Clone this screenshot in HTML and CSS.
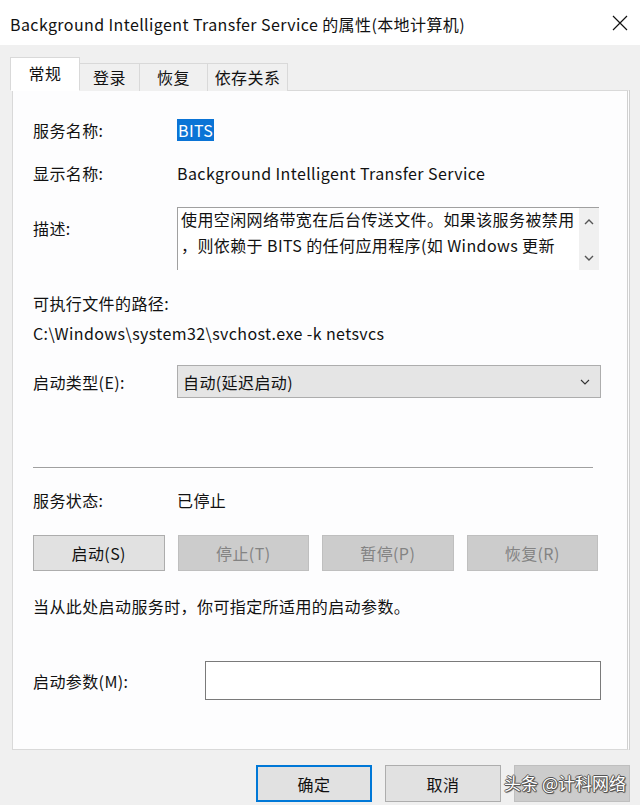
FILE: index.html
```html
<!DOCTYPE html>
<html lang="zh-CN">
<head>
<meta charset="utf-8">
<title>BITS 属性</title>
<link rel="stylesheet" href="styles.css">
</head>
<body>
<div class="window">
  <div class="titlebar">
    <span class="title">Background Intelligent Transfer Service 的属性(本地计算机)</span>
    <svg class="close" width="16" height="16" viewBox="0 0 16 16"><path d="M1 1 L15 15 M15 1 L1 15" stroke="#111" stroke-width="1.2" fill="none"/></svg>
  </div>
  <div class="body">
    <div class="tabs">
      <div class="tab tab-active">常规</div>
      <div class="tab tab-2">登录</div>
      <div class="tab tab-3">恢复</div>
      <div class="tab tab-4">依存关系</div>
    </div>
    <div class="panel">
      <div class="row row-name">
        <span class="label">服务名称:</span>
        <span class="value"><span class="selected">BITS</span></span>
      </div>
      <div class="row row-display">
        <span class="label">显示名称:</span>
        <span class="value">Background Intelligent Transfer Service</span>
      </div>
      <div class="row row-desc">
        <span class="label label-desc">描述:</span>
        <div class="descbox">
          <div class="desctext">
            <div>使用空闲网络带宽在后台传送文件。如果该服务被禁用</div>
            <div>，则依赖于 BITS 的任何应用程序(如 Windows 更新</div>
          </div>
          <div class="scrollbar">
            <svg width="10" height="6" viewBox="0 0 10 6"><path d="M1 5 L5 1 L9 5" stroke="#555" stroke-width="1.4" fill="none"/></svg>
            <svg width="10" height="6" viewBox="0 0 10 6"><path d="M1 1 L5 5 L9 1" stroke="#555" stroke-width="1.4" fill="none"/></svg>
          </div>
        </div>
      </div>
      <div class="pathlabel">可执行文件的路径:</div>
      <div class="path">C:\Windows\system32\svchost.exe -k netsvcs</div>
      <div class="row row-type">
        <span class="label">启动类型(E):</span>
        <div class="select">
          <span>自动(延迟启动)</span>
          <svg width="10" height="6" viewBox="0 0 10 6"><path d="M1 1 L5 5 L9 1" stroke="#333" stroke-width="1.1" fill="none"/></svg>
        </div>
      </div>
      <div class="separator"></div>
      <div class="row row-status">
        <span class="label">服务状态:</span>
        <span class="value">已停止</span>
      </div>
      <div class="actions">
        <div class="btn">启动(S)</div>
        <div class="btn btn-disabled">停止(T)</div>
        <div class="btn btn-disabled">暂停(P)</div>
        <div class="btn btn-disabled">恢复(R)</div>
      </div>
      <div class="hint">当从此处启动服务时，你可指定所适用的启动参数。</div>
      <div class="row row-param">
        <span class="label label-param">启动参数(M):</span>
        <div class="input"></div>
      </div>
    </div>
    <div class="footer">
      <div class="btn btn-default">确定</div>
      <div class="btn">取消</div>
      <div class="btn btn-disabled"></div>
    </div>
  </div>
  <div class="watermark">头条 @计科网络</div>
</div>
</body>
</html>
```
FILE: styles.css
```css
html, body {
  margin: 0;
  padding: 0;
}
body {
  width: 640px;
  height: 805px;
  overflow: hidden;
  font-family: "Noto Sans CJK SC", "Noto Sans", sans-serif;
  font-size: 16px;
  letter-spacing: 0.4px;
  color: #111;
}
.window {
  position: relative;
  width: 640px;
  height: 805px;
  background: #f0f0f0;
}
.titlebar {
  height: 45px;
  background: #fff;
  display: flex;
  align-items: center;
  justify-content: space-between;
  padding: 2px 12px 0 10px;
  box-sizing: border-box;
}
.title {
  font-size: 16px;
  line-height: 22px;
}
.close {
  display: block;
  margin-top: -2px;
}
.body {
  padding: 0 10px 0 12px;
}
.tabs {
  display: flex;
  align-items: flex-end;
  height: 45px;
  margin-left: -2px;
}
.tab {
  height: 28px;
  box-sizing: border-box;
  border: 1px solid #d9d9d9;
  border-bottom: none;
  background: #f0f0f0;
  display: flex;
  align-items: center;
  justify-content: center;
  line-height: 20px;
  margin-bottom: -1px;
  padding-bottom: 2px;
  position: relative;
}
.tab-active {
  width: 70px;
  height: 34px;
  background: #fff;
  border-bottom: 1px solid #fff;
  padding-bottom: 3px;
  z-index: 1;
}
.tab-2 { width: 60px; border-left: none; }
.tab-3 { width: 68px; border-left: none; }
.tab-4 { width: 80px; border-left: none; }
.panel {
  width: 618px;
  height: 660px;
  box-sizing: border-box;
  background: #fdfdfe;
  border: 1px solid #d9d9d9;
  border-right: 3px double #d0d0d0;
  padding: 28px 26px 0 20px;
  display: flex;
  flex-direction: column;
}
.row {
  display: flex;
  align-items: flex-start;
  line-height: 22px;
}
.label {
  width: 144px;
  flex: none;
}
.selected {
  background: #0a74d6;
  color: #fff;
  padding: 0 1px;
  display: inline-block;
  line-height: 22px;
}
.row-display { margin-top: 21px; }
.row-desc { margin-top: 23px; }
.label-desc { padding-top: 10px; }
.descbox {
  width: 422px;
  height: 63px;
  box-sizing: border-box;
  border-top: 1px solid #a0a0a0;
  border-left: 1px solid #a0a0a0;
  background: #fff;
  display: flex;
}
.desctext {
  flex: 1;
  padding-left: 3px;
  line-height: 26px;
  margin-top: -2px;
  white-space: nowrap;
  overflow: hidden;
}
.scrollbar {
  width: 20px;
  background: #f0f0f0;
  display: flex;
  flex-direction: column;
  justify-content: space-between;
  align-items: center;
  padding: 11px 0 9px;
}
.scrollbar svg { display: block; }
.pathlabel {
  margin-top: 22px;
  line-height: 22px;
}
.path {
  margin-top: 8px;
  line-height: 22px;
}
.row-type {
  margin-top: 21px;
  align-items: center;
}
.select {
  width: 424px;
  height: 33px;
  box-sizing: border-box;
  background: #e5e5e5;
  border: 1px solid #adadad;
  display: flex;
  align-items: center;
  justify-content: space-between;
  padding: 0 10px 0 5px;
}
.select svg { display: block; }
.separator {
  margin-top: 69px;
  height: 1px;
  background: #a0a0a0;
  border-bottom: 1px solid #fff;
  width: 560px;
}
.row-status { margin-top: 20px; }
.actions {
  margin-top: 24px;
  display: grid;
  grid-template-columns: repeat(4, 1fr);
  gap: 13px;
  width: 565px;
}
.btn {
  height: 36px;
  box-sizing: border-box;
  background: #e1e1e1;
  border: 1px solid #adadad;
  display: flex;
  align-items: center;
  justify-content: center;
  line-height: 20px;
}
.btn-disabled {
  background: #cccccc;
  border-color: #bfbfbf;
  color: #838383;
}
.hint {
  margin-top: 24px;
  line-height: 22px;
}
.row-param {
  margin-top: 44px;
  align-items: center;
}
.label-param { width: 172px; }
.input {
  width: 396px;
  height: 39px;
  box-sizing: border-box;
  background: #fff;
  border: 1px solid #7a7a7a;
}
.footer {
  margin-top: 15px;
  display: flex;
  justify-content: flex-end;
  gap: 13px;
}
.footer .btn {
  width: 116px;
  height: 37px;
}
.btn-default {
  border: 2px solid #0078d7;
}
.watermark {
  position: absolute;
  right: 14px;
  bottom: 11px;
  font-size: 17px;
  line-height: 22px;
  letter-spacing: 0;
  color: #fff;
  text-shadow: 1px 0 0 #555, -1px 0 0 #555, 0 1px 0 #555, 0 -1px 0 #555, 1px 1px 1px #444;
}
```
